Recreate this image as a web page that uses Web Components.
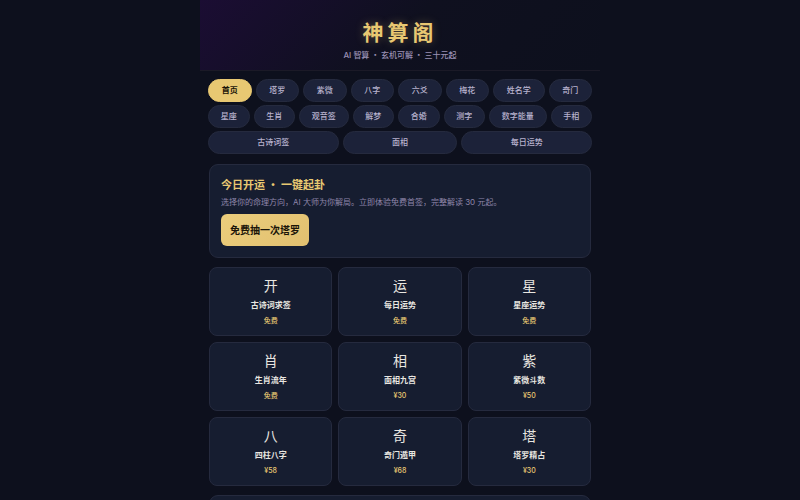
<!DOCTYPE html>
<html lang="zh-CN">
<head>
<meta charset="UTF-8">
<meta name="viewport" content="width=device-width, initial-scale=1">
<title>神算阁</title>
<style>
:root {
    --bg: #0d101d;
    --card: #161d30;
    --pill: #1c2239;
    --line: #252a3e;
    --gold: #e8c872;
    --text: #e8e6e0;
    --muted: #9a90b4;
    --cjk: "Noto Sans CJK SC", sans-serif;
}

body {
    margin: 0;
    height: 100vh;
    overflow: hidden;
    background: var(--bg);
    color: var(--text);
    font-family: Inter, "Noto Sans CJK SC", sans-serif;
    font-size: 8px;
    line-height: 12px;
}
</style>
</head>
<body>
<fortune-app></fortune-app>

<script>
const NAV_ITEMS = [
    "首页", "塔罗", "紫微", "八字", "六爻", "梅花", "姓名学", "奇门",
    "星座", "生肖", "观音签", "解梦", "合婚", "测字", "数字能量", "手相",
    "古诗词签", "面相", "每日运势"
];

const SERVICES = [
    { icon: "开", name: "古诗词求签", price: "免费" },
    { icon: "运", name: "每日运势", price: "免费" },
    { icon: "星", name: "星座运势", price: "免费" },
    { icon: "肖", name: "生肖流年", price: "免费" },
    { icon: "相", name: "面相九宫", price: "¥30" },
    { icon: "紫", name: "紫微斗数", price: "¥50" },
    { icon: "八", name: "四柱八字", price: "¥58" },
    { icon: "奇", name: "奇门遁甲", price: "¥68" },
    { icon: "塔", name: "塔罗精占", price: "¥30" }
];

class SiteHeader extends HTMLElement {
    constructor() {
        super();
        this.attachShadow({ mode: "open" });
        this.shadowRoot.innerHTML = `
<style>
:host {
    display: block;
    padding: 20px 16px 9px;
    text-align: center;
    background: linear-gradient(135deg, #1b0d33 0%, #0f101f 50%, #0d101d 100%);
    border-bottom: 1px solid #1b1a27;
}
h1 {
    margin: 0;
    font-size: 21px;
    line-height: 26px;
    font-weight: 700;
    letter-spacing: 4px;
    color: var(--gold);
    text-shadow: 0 0 10px rgba(232, 200, 114, 0.3);
}
p {
    margin: 3px 0 0;
    color: var(--muted);
    font-weight: 500;
}
</style>
<h1><slot></slot></h1>
<p><slot name="tagline"></slot></p>
`;
    }
}

class NavPills extends HTMLElement {
    constructor() {
        super();
        this.attachShadow({ mode: "open" });
        this.active = NAV_ITEMS[0];
        this.render();
    }

    render() {
        this.shadowRoot.innerHTML = `
<style>
:host {
    display: block;
    padding: 8px 8px 0;
}
nav {
    display: flex;
    flex-wrap: wrap;
    gap: 3px 4px;
}
button {
    flex: 1 0 auto;
    margin: 0;
    padding: 4px 11px;
    border: 1px solid var(--line);
    border-radius: 12px;
    background: var(--pill);
    color: #b8b2ce;
    font: inherit;
    font-weight: 500;
    line-height: 13px;
    white-space: nowrap;
    cursor: pointer;
}
button[aria-current] {
    border-color: var(--gold);
    background: var(--gold);
    color: #1a1408;
    font-weight: 600;
}
</style>
<nav></nav>
`;
        const nav = this.shadowRoot.querySelector("nav");
        NAV_ITEMS.forEach((label) => {
            const button = document.createElement("button");
            button.type = "button";
            button.textContent = label;
            if (label === this.active) {
                button.setAttribute("aria-current", "page");
            }
            button.addEventListener("click", () => {
                this.active = label;
                this.render();
            });
            nav.appendChild(button);
        });
    }
}

class PanelCard extends HTMLElement {
    constructor() {
        super();
        this.attachShadow({ mode: "open" });
        this.shadowRoot.innerHTML = `
<style>
:host {
    display: block;
    padding: 11px;
    border: 1px solid var(--line);
    border-radius: 9px;
    background: var(--card);
}
</style>
<slot></slot>
`;
    }
}

class DailyPromo extends HTMLElement {
    constructor() {
        super();
        this.attachShadow({ mode: "open" });
        this.shadowRoot.innerHTML = `
<style>
:host {
    display: block;
}
h2 {
    margin: 0;
    font-family: var(--cjk);
    font-size: 11px;
    line-height: 16px;
    font-weight: 700;
    color: var(--gold);
}
p {
    margin: 4px 0 5px;
    line-height: 13px;
    color: #8f86aa;
}
button {
    display: block;
    margin: 0;
    padding: 8px 9px;
    border: 0;
    border-radius: 6px;
    background: linear-gradient(135deg, #ebcd7c, #e2c070);
    color: #1a1408;
    font: inherit;
    font-size: 10px;
    line-height: 16px;
    font-weight: 600;
    cursor: pointer;
}
</style>
<h2>今日开运 · 一键起卦</h2>
<p>选择你的命理方向，AI 大师为你解局。立即体验免费首签，完整解读 30 元起。</p>
<button type="button">免费抽一次塔罗</button>
`;
    }
}

class ServiceCard extends HTMLElement {
    constructor() {
        super();
        this.attachShadow({ mode: "open" });
    }

    setData(service) {
        this.shadowRoot.innerHTML = `
<style>
:host {
    display: block;
}
a {
    display: block;
    padding: 8px 6px;
    border: 1px solid var(--line);
    border-radius: 8px;
    background: var(--card);
    color: inherit;
    text-align: center;
    text-decoration: none;
}
.icon {
    font-size: 14px;
    line-height: 20px;
}
.name {
    margin-top: 3px;
    font-weight: 700;
}
.price {
    margin-top: 4px;
    font-size: 7px;
    font-weight: 500;
    color: var(--gold);
}
</style>
<a href="#">
<div class="icon">${service.icon}</div>
<div class="name">${service.name}</div>
<div class="price">${service.price}</div>
</a>
`;
    }
}

class ServiceGrid extends HTMLElement {
    constructor() {
        super();
        this.attachShadow({ mode: "open" });
        this.shadowRoot.innerHTML = `
<style>
:host {
    display: grid;
    grid-template-columns: repeat(3, 1fr);
    gap: 6px;
}
</style>
`;
        SERVICES.forEach((service) => {
            const card = document.createElement("service-card");
            card.setData(service);
            this.shadowRoot.appendChild(card);
        });
    }
}

class FortuneApp extends HTMLElement {
    constructor() {
        super();
        this.attachShadow({ mode: "open" });
        this.shadowRoot.innerHTML = `
<style>
:host {
    display: flex;
    flex-direction: column;
    height: 100%;
    max-width: 400px;
    margin: 0 auto;
}
main {
    display: flex;
    flex: 1;
    flex-direction: column;
    gap: 9px;
    min-height: 0;
    padding: 10px 9px 0;
    overflow: hidden;
}
.dot {
    font-family: var(--cjk);
}
.more {
    min-height: 60px;
}
</style>
<site-header>神算阁<span slot="tagline">AI 智算<span class="dot"> · </span>玄机可解<span class="dot"> · </span>三十元起</span></site-header>
<nav-pills></nav-pills>
<main>
<panel-card><daily-promo></daily-promo></panel-card>
<service-grid></service-grid>
<panel-card class="more"></panel-card>
</main>
`;
    }
}

customElements.define("site-header", SiteHeader);
customElements.define("nav-pills", NavPills);
customElements.define("panel-card", PanelCard);
customElements.define("daily-promo", DailyPromo);
customElements.define("service-card", ServiceCard);
customElements.define("service-grid", ServiceGrid);
customElements.define("fortune-app", FortuneApp);
</script>
</body>
</html>
